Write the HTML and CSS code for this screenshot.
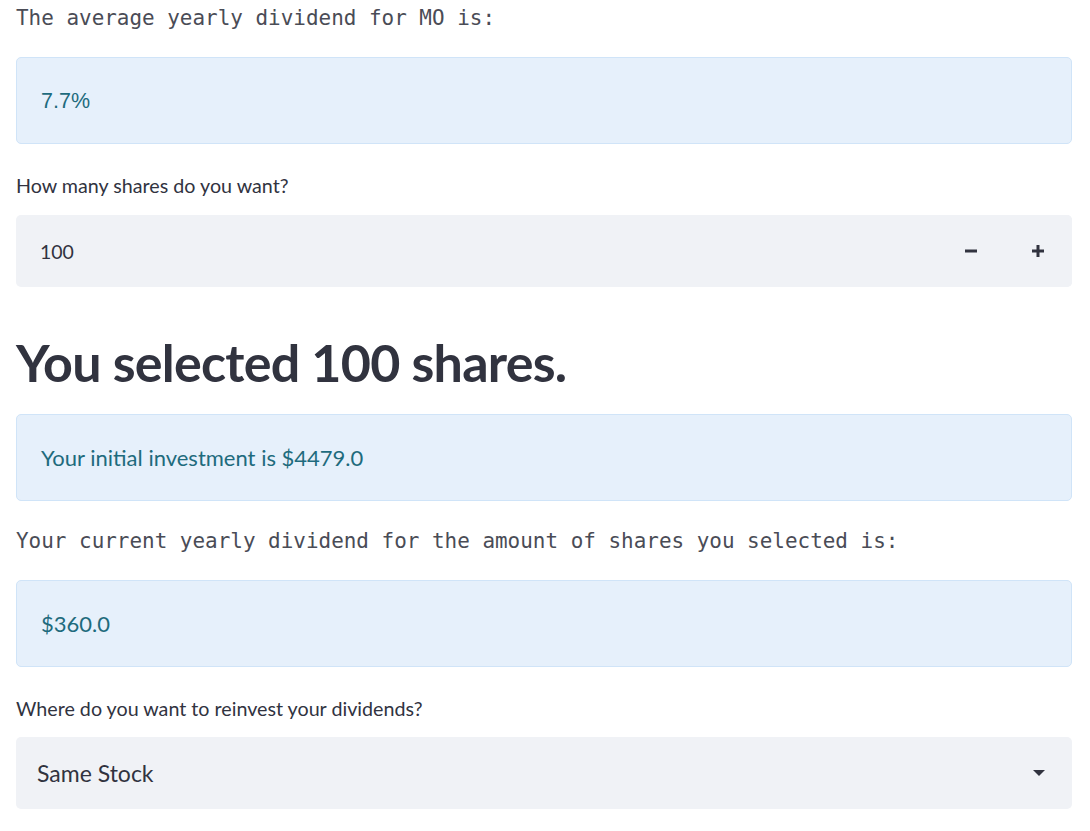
FILE: index.html
```html
<!DOCTYPE html>
<html lang="en">
<head>
<meta charset="utf-8">
<title>Dividend reinvestment</title>
<link rel="stylesheet" href="styles.css">
</head>
<body>
<main class="page">
  <p class="mono">The average yearly dividend for MO is:</p>
  <div class="alert alert-first"><span class="alert-num">7.7%</span></div>

  <label class="label label-shares">How many shares do you want?</label>
  <div class="number-input">
    <div class="number-value">100</div>
    <div class="steppers">
      <button class="step" aria-label="decrease">
        <svg width="14" height="14" viewBox="0 0 14 14"><rect x="1" y="5.5" width="12" height="3" fill="#31333f"/></svg>
      </button>
      <button class="step" aria-label="increase">
        <svg width="14" height="14" viewBox="0 0 14 14"><rect x="1" y="5.5" width="12" height="3" fill="#31333f"/><rect x="5.5" y="1" width="3" height="12" fill="#31333f"/></svg>
      </button>
    </div>
  </div>

  <h1 class="heading">You selected 100 shares.</h1>

  <div class="alert alert-second"><span class="alert-text">Your initial investment is $4479.0</span></div>

  <p class="mono mono-second">Your current yearly dividend for the amount of shares you selected is:</p>
  <div class="alert alert-third"><span class="alert-text">$360.0</span></div>

  <label class="label label-reinvest">Where do you want to reinvest your dividends?</label>
  <div class="select">
    <span class="select-value">Same Stock</span>
    <svg class="caret" width="12" height="6" viewBox="0 0 12 6"><path d="M0 0 H12 L6 6 Z" fill="#31333f"/></svg>
  </div>
</main>
</body>
</html>
```
FILE: styles.css
```css
html, body {
  margin: 0;
  padding: 0;
  background: #ffffff;
}

.page {
  width: 1056px;
  padding: 3px 0 0 16px;
  font-family: "Source Sans Pro", Lato, "Noto Sans", sans-serif;
  color: #31333f;
}

.mono {
  margin: 0;
  font-family: "DejaVu Sans Mono", "Liberation Mono", monospace;
  font-size: 20.95px;
  line-height: 30px;
  color: #4a4c56;
  white-space: pre;
}

.mono-second {
  margin-top: 25px;
}

.alert {
  box-sizing: border-box;
  height: 87px;
  display: flex;
  align-items: center;
  padding: 0 24px;
  background: #e6f0fb;
  border: 1px solid #d0e4f8;
  border-radius: 5px;
  color: #1e6b7d;
}

.alert-first { margin-top: 24px; }
.alert-second { margin-top: 17px; }
.alert-third { margin-top: 24px; }

.alert-num {
  font-family: "Liberation Sans", Arial, sans-serif;
  font-size: 21.5px;
  line-height: 30px;
}

.alert-text {
  font-size: 22px;
  line-height: 30px;
}

.label {
  display: block;
  font-size: 19.7px;
  line-height: 24px;
  color: #31333f;
}

.label-shares { margin-top: 30px; }
.label-reinvest { margin-top: 30px; }

.number-input {
  margin-top: 17px;
  height: 72px;
  display: flex;
  background: #f0f2f6;
  border-radius: 5px;
}

.number-value {
  flex: 1;
  display: flex;
  align-items: center;
  padding-left: 24px;
  font-size: 19.5px;
}

.steppers {
  width: 135px;
  display: flex;
  background: #f0f2f6;
  border-radius: 5px;
}

.step {
  flex: 1;
  border: 0;
  background: transparent;
  padding: 0;
  display: flex;
  align-items: center;
  justify-content: center;
}

.heading {
  margin: 43px 0 0;
  height: 67px;
  font-size: 52px;
  line-height: 64px;
  font-weight: 700;
  color: #31333f;
  letter-spacing: -0.75px;
}

.select {
  margin-top: 16px;
  height: 72px;
  display: flex;
  align-items: center;
  justify-content: space-between;
  padding: 0 27px 0 21px;
  background: #f0f2f6;
  border-radius: 5px;
}

.select-value {
  font-size: 23px;
}

.caret {
  display: block;
}
```
